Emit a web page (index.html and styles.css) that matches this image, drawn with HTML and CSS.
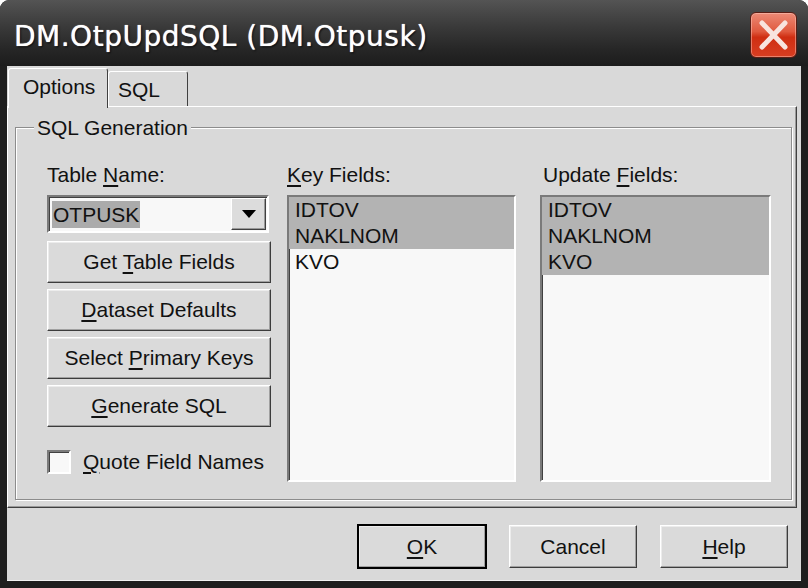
FILE: index.html
```html
<!DOCTYPE html>
<html>
<head>
    <title>DM.OtpUpdSQL</title>
    <link rel="stylesheet" href="styles.css">
</head>
<body>
    <div class="window">
        <div class="titlebar">
            <span class="title">DM.OtpUpdSQL (DM.Otpusk)</span>
            <span class="close">
                <svg width="45" height="44" viewBox="0 0 45 44">
                    <path d="M11 10 L34 34 M34 10 L11 34" stroke="#f8e4df" stroke-width="5" stroke-linecap="round"/>
                </svg>
            </span>
        </div>

        <div class="client">
            <div class="tabs">
                <div class="tab active">Options</div>
                <div class="tab">SQL</div>
            </div>

            <div class="panel">
                <fieldset class="group">
                    <legend>SQL Generation</legend>
                    <div class="columns">
                        <div class="col-left">
                            <div class="label">Table <u>N</u>ame:</div>
                            <div class="combo">
                                <span class="combo-text"><span class="sel">OTPUSK</span></span>
                                <span class="combo-btn">
                                    <svg width="14" height="8" viewBox="0 0 14 8"><path d="M0 0 H14 L7 8 Z" fill="#000"/></svg>
                                </span>
                            </div>
                            <div class="btn"><span>Get <u>T</u>able Fields</span></div>
                            <div class="btn"><span><u>D</u>ataset Defaults</span></div>
                            <div class="btn"><span>Select <u>P</u>rimary Keys</span></div>
                            <div class="btn"><span><u>G</u>enerate SQL</span></div>
                            <div class="check">
                                <span class="box"></span>
                                <span><u>Q</u>uote Field Names</span>
                            </div>
                        </div>

                        <div class="col-key">
                            <div class="label"><u>K</u>ey Fields:</div>
                            <ul class="list">
                                <li class="selected">IDTOV</li>
                                <li class="selected">NAKLNOM</li>
                                <li>KVO</li>
                            </ul>
                        </div>

                        <div class="col-upd">
                            <div class="label label-upd">Update <u>F</u>ields:</div>
                            <ul class="list">
                                <li class="selected">IDTOV</li>
                                <li class="selected">NAKLNOM</li>
                                <li class="selected">KVO</li>
                            </ul>
                        </div>
                    </div>
                </fieldset>
            </div>

            <div class="footer">
                <div class="btn btn-dlg default"><span><u>O</u>K</span></div>
                <div class="btn btn-dlg"><span>Cancel</span></div>
                <div class="btn btn-dlg"><span><u>H</u>elp</span></div>
            </div>
        </div>
    </div>
</body>
</html>
```

FILE: styles.css
```css
* {
    box-sizing: border-box;
}

body {
    margin: 0;
    padding: 0;
    background: #fff;
    font-family: "Liberation Sans", Arial, sans-serif;
    font-size: 21px;
    color: #111;
}

u {
    text-decoration-thickness: 2px;
    text-underline-offset: 3px;
}

.window {
    width: 808px;
    height: 588px;
    background: #1e1e1e;
    border-radius: 9px 9px 0 0;
    display: flex;
    flex-direction: column;
    overflow: hidden;
}

/* Title bar */
.titlebar {
    height: 66px;
    flex: none;
    display: flex;
    align-items: flex-start;
    background: linear-gradient(#545454 0%, #3a3a3a 40%, #262626 75%, #1c1c1c 100%);
}

.title {
    margin: 17px 0 0 14px;
    font-family: "DejaVu Sans", sans-serif;
    font-size: 28px;
    line-height: 40px;
    letter-spacing: 0.5px;
    color: #fff;
    text-shadow: 0 0 1px #fff, 1px 1px 2px #000;
}

.close {
    margin: 12px 11px 0 auto;
    width: 47px;
    height: 46px;
    border: 1px solid #5a1d14;
    border-radius: 6px;
    background: linear-gradient(#ec8a76 0%, #e0593e 42%, #cf2e12 55%, #d83e22 100%);
    box-shadow: inset 0 0 0 1px rgba(255, 210, 200, 0.45);
    display: flex;
    align-items: center;
    justify-content: center;
}

/* Client area */
.client {
    flex: 1;
    margin: 0 7px 7px 7px;
    background: #d9d9d9;
    display: flex;
    flex-direction: column;
    border-bottom: 1px solid #f2f2f2;
}

.tabs {
    height: 40px;
    flex: none;
    display: flex;
    align-items: flex-end;
    padding-left: 1px;
}

.tab {
    height: 35px;
    padding: 6px 0 0 9px;
    width: 80px;
    line-height: 24px;
    border: 1px solid;
    border-color: #fff #404040 transparent #fff;
    border-bottom: none;
    border-radius: 3px 3px 0 0;
    background: #d9d9d9;
}

.tab.active {
    width: 100px;
    height: 40px;
    padding-left: 14px;
    margin-bottom: -2px;
    position: relative;
    z-index: 1;
}

.panel {
    height: 402px;
    flex: none;
    margin-right: 4px;
    border: 1px solid;
    border-color: #fff #404040 #404040 #fff;
    box-shadow: inset -1px -1px 0 #9a9a9a;
    display: flex;
    flex-direction: column;
}

.group {
    flex: 1;
    margin: 7px 4px 7px 7px;
    padding: 0;
    min-width: 0;
    border: 1px solid #8c8c8c;
    box-shadow: inset 1px 1px 0 #fff, 1px 1px 0 #fff;
}

.group legend {
    margin-left: 18px;
    padding: 2px 3px 0 3px;
    line-height: 24px;
    background: #d9d9d9;
}

.columns {
    display: flex;
    padding: 22px 0 0 31px;
}

.label {
    line-height: 24px;
    margin-bottom: 8px;
    padding-top: 1px;
}

.label-upd {
    padding-left: 3px;
}

.col-left {
    width: 224px;
    display: flex;
    flex-direction: column;
}

.col-key {
    width: 229px;
    margin-left: 16px;
}

.col-upd {
    width: 231px;
    margin-left: 24px;
}

/* Combo box */
.combo {
    height: 38px;
    width: 222px;
    display: flex;
    padding: 1px;
    border: 2px solid;
    border-color: #7a7a7a #fff #fff #7a7a7a;
    background: #f8f8f8;
    box-shadow: inset 1px 1px 0 #404040;
}

.combo-text {
    flex: 1;
    display: flex;
    align-items: center;
    padding-left: 2px;
}

.sel {
    background: #ababab;
    padding: 0 1px;
    line-height: 27px;
}

.combo-btn {
    width: 35px;
    height: 32px;
    border: 1px solid;
    border-color: #fff #404040 #404040 #fff;
    box-shadow: inset -1px -1px 0 #999;
    background: #dcdcdc;
    display: flex;
    align-items: center;
    justify-content: center;
}

/* Buttons */
.btn {
    height: 42px;
    margin-top: 6px;
    border: 1px solid;
    border-color: #fff #3c3c3c #3c3c3c #fff;
    box-shadow: inset -1px -1px 0 #a0a0a0, inset 1px 1px 0 #ececec;
    background: #dadada;
    display: flex;
    align-items: center;
    justify-content: center;
}

.combo + .btn {
    margin-top: 8px;
}

.check {
    margin-top: 23px;
    display: flex;
    align-items: center;
    gap: 12px;
}

.box {
    width: 24px;
    height: 24px;
    border: 2px solid;
    border-color: #7a7a7a #fff #fff #7a7a7a;
    box-shadow: inset 1px 1px 0 #404040;
    background: #f8f8f8;
}

/* List boxes */
.list {
    list-style: none;
    margin: 0;
    padding: 0;
    height: 287px;
    border: 2px solid;
    border-color: #7a7a7a #fff #fff #7a7a7a;
    box-shadow: inset 1px 1px 0 #404040;
    background: #f8f8f8;
}

.list li {
    line-height: 26px;
    padding-left: 6px;
}

.list li.selected {
    background: #b3b3b3;
}

/* Dialog buttons */
.footer {
    flex: 1;
    display: flex;
    justify-content: flex-end;
    align-items: flex-start;
    gap: 23px;
    padding: 17px 13px 0 0;
}

.btn-dlg {
    width: 128px;
    height: 43px;
    margin-top: 0;
}

.btn-dlg.default {
    outline: 2px solid #000;
    outline-offset: -1px;
}
```
